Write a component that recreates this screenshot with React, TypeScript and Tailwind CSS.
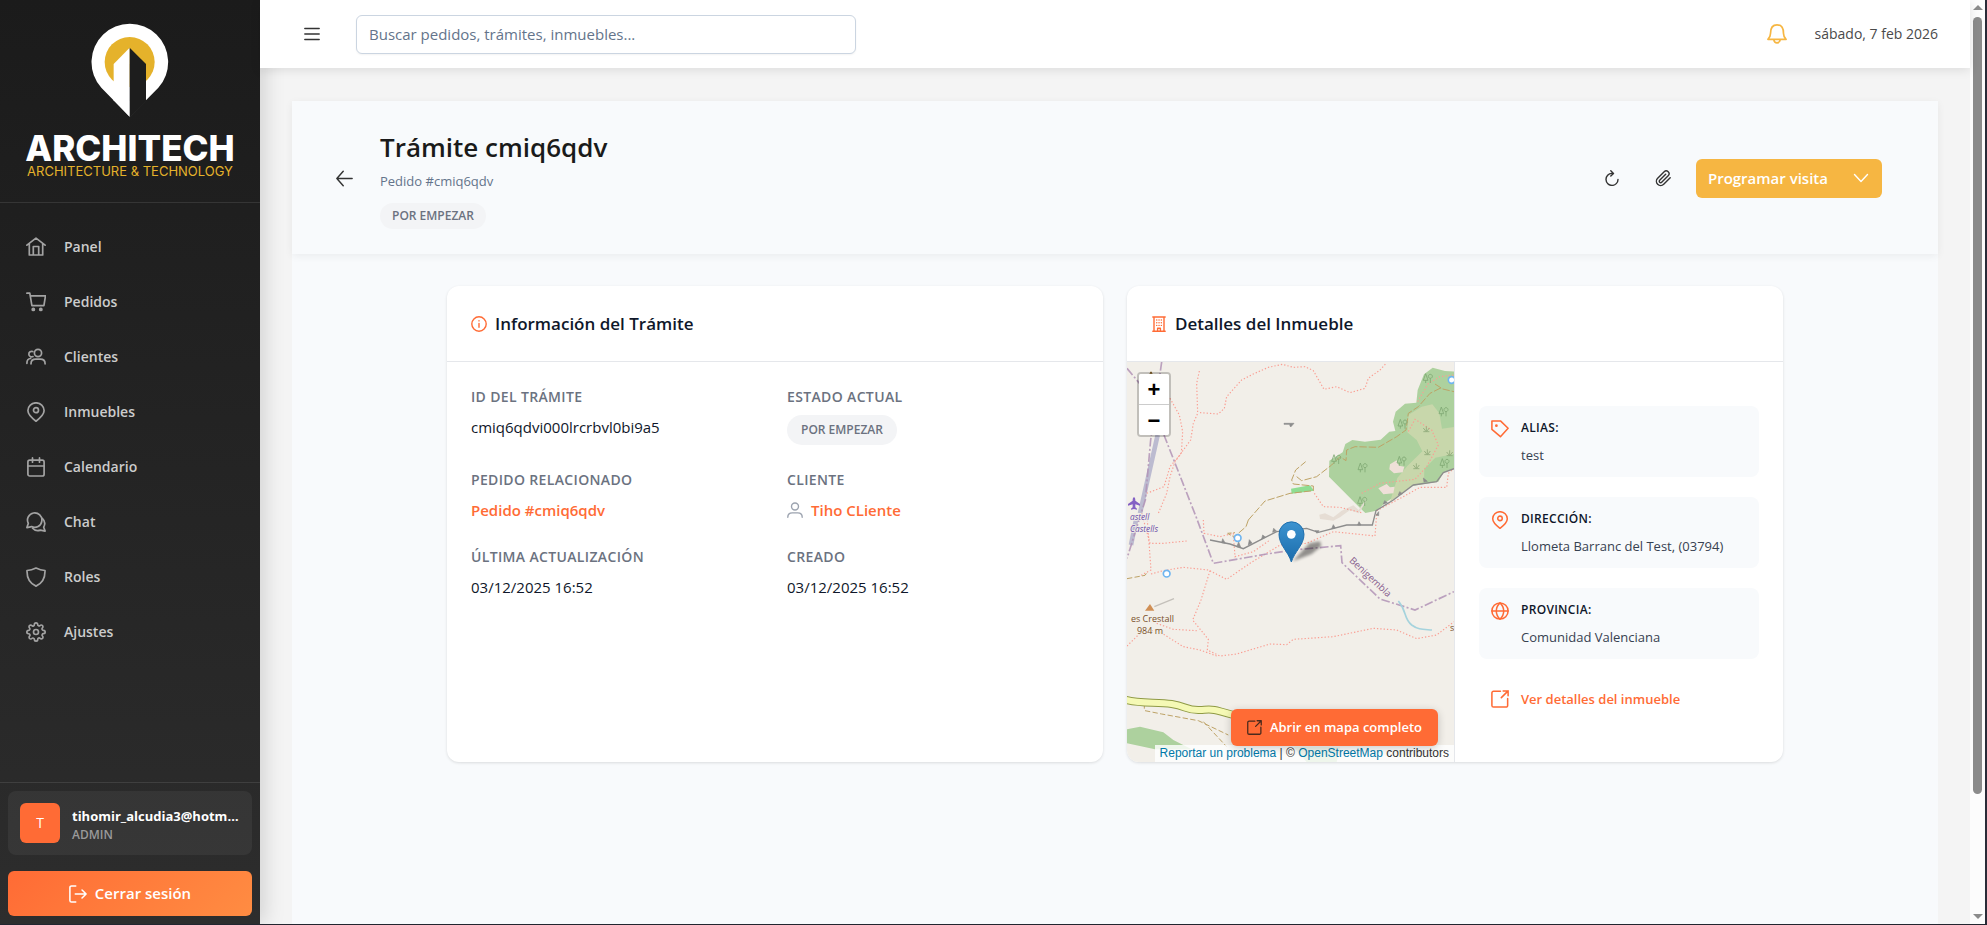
import React from 'react';
import { FiPaperclip, FiSettings } from 'react-icons/fi';

type IconProps = { className?: string; children?: React.ReactNode; box?: number };

const Icon = ({ className = 'size-5', children, box = 20 }: IconProps) => (
  <svg
    className={`shrink-0 ${className}`}
    viewBox={`0 0 ${box} ${box}`}
    fill="none"
    stroke="currentColor"
    strokeWidth={box === 20 ? 1.7 : 1.4}
    strokeLinecap="round"
    strokeLinejoin="round"
    aria-hidden="true"
  >
    {children}
  </svg>
);

const PinIcon = ({ className }: IconProps) => (
  <Icon className={className}>
    <path d="M10 19.2C6.5 16.6 1.9 13 1.9 8.6a8.1 7.8 0 0 1 16.2 0c0 4.4-4.6 8-8.1 10.6z" />
    <circle cx="10" cy="8.2" r="2.5" />
  </Icon>
);

const ExternalIcon = ({ className }: IconProps) => (
  <Icon className={className}>
    <path d="M10.5 1.5H2.8A1.8 1.8 0 0 0 1 3.3v13.9A1.8 1.8 0 0 0 2.8 19h13.9a1.8 1.8 0 0 0 1.8-1.8V9.5M11.5 8.5 19 1M13.5 1H19v5.5" />
  </Icon>
);

const navItems = [
  {
    label: 'Panel',
    icon: (
      <Icon>
        <path d="M.9 8.2 10 1.2l9.1 7M3.3 6.8V18h13.4V6.8M7.3 18V9.5h5.4V18" />
      </Icon>
    ),
  },
  {
    label: 'Pedidos',
    icon: (
      <Icon>
        <path d="M.9 1.2h2.9l2.1 12.4h12l1.6-9.8H4.3" />
        <circle cx="7.3" cy="17.4" r="1.1" fill="currentColor" />
        <circle cx="14.8" cy="17.4" r="1.1" fill="currentColor" />
      </Icon>
    ),
  },
  {
    label: 'Clientes',
    icon: (
      <Icon>
        <circle cx="12" cy="6" r="3.6" />
        <path d="M5 16.8c0-3 1.8-4.6 4.8-4.6h4.5c3 0 4.8 1.6 4.8 4.6M6.8 4.6a2.8 2.8 0 1 0 .2 5M.9 16.3c0-3 1.1-4.6 3.7-4.8" />
      </Icon>
    ),
  },
  { label: 'Inmuebles', icon: <PinIcon /> },
  {
    label: 'Calendario',
    icon: (
      <Icon>
        <rect x="1.9" y="3.2" width="16.2" height="15.8" rx="1.8" />
        <path d="M2 9h16M6.5.9v4.3M13.500.9v4.3" />
      </Icon>
    ),
  },
  {
    label: 'Chat',
    icon: (
      <Icon>
        <path d="M.9 15.6 2.3 11.4a7.2 7.2 0 1 1 3.3 3.2z" />
        <path d="M6.6 16.2c2 2.3 5 2.8 7.8 1.9l4.7 1-1.4-3.9c1.6-3 1-6.6-1.4-8.8" />
      </Icon>
    ),
  },
  {
    label: 'Roles',
    icon: (
      <Icon>
        <path d="M10 1c2.8 1.4 5.8 2.3 9 2.5.2 7.2-2.6 12.8-9 15.6C3.600 16.300.8 10.700 1 3.500 4.200 3.300 7.200 2.400 10 1z" />
      </Icon>
    ),
  },
  { label: 'Ajustes', icon: <FiSettings className="size-5 shrink-0" /> },
];

const Logo = () => (
  <div className="flex flex-col items-center border-b border-white/10 px-4 pt-[23px] pb-6">
    <svg className="h-[94px] w-[78px]" viewBox="272 67 234 282" aria-hidden="true">
      <path d="M388 348 303 261A115 115 0 1 1 474 261L437 299z" fill="#fff" />
      <circle cx="388" cy="184" r="75" fill="#e5b22b" />
      <path d="M340 190 388 141V348L340 299z" fill="#fff" />
      <path d="M388 141 437 190V301L388 350z" fill="#1d1d1d" />
    </svg>
    <div className="mt-[14px] font-['Inter',sans-serif] text-[35px] leading-[34px] font-extrabold text-white">ARCHITECH</div>
    <div className="font-['Inter',sans-serif] text-[13px] leading-[13px] whitespace-nowrap text-[#e5b22b]">
      ARCHITECTURE &amp; TECHNOLOGY
    </div>
  </div>
);

const Sidebar = () => (
  <aside className="relative z-10 flex w-[260px] shrink-0 flex-col bg-linear-to-b from-[#1b1b1b] to-[#2d2d2d] shadow-[4px_0_20px_rgba(0,0,0,0.15)]">
    <Logo />
    <nav className="flex flex-1 flex-col gap-2 pt-5">
      {navItems.map((item) => (
        <a key={item.label} href="#" className="flex h-[47px] items-center gap-[18px] px-[26px] text-sm font-semibold text-[#cccccc]">
          <span className="text-[#a3a3a3]">{item.icon}</span>
          {item.label}
        </a>
      ))}
    </nav>
    <div className="border-t border-white/10 p-2">
      <div className="flex h-16 items-center gap-3 rounded-lg bg-white/5 px-3">
        <div className="flex size-10 shrink-0 items-center justify-center rounded-md bg-[#ff6b35] text-sm text-white">T</div>
        <div className="min-w-0 flex-1 pt-1">
          <p className="truncate text-[13px] leading-5 font-bold text-white">tihomir_alcudia3@hotmail.com</p>
          <p className="text-xs leading-[18px] font-semibold text-[#9a9a9a]">ADMIN</p>
        </div>
      </div>
      <button className="mt-4 flex h-[45px] w-full items-center justify-center gap-2 rounded-md bg-linear-135 from-[#ff6b35] to-[#ff8c42] text-[15px] font-semibold text-white">
        <Icon className="size-[18px]">
          <path d="M7.5 1H2.8A1.8 1.8 0 0 0 1 2.8v14.4A1.8 1.8 0 0 0 2.8 19h4.7M7 10h12M14.5 5.5 19 10l-4.5 4.5" />
        </Icon>
        Cerrar sesión
      </button>
    </div>
  </aside>
);

const TopBar = () => (
  <header className="relative z-20 flex h-[68px] shrink-0 items-center bg-white pr-8 pl-9 shadow-[0_2px_10px_rgba(0,0,0,0.1)]">
    <button aria-label="Menú" className="flex size-8 items-center justify-center text-[#333]">
      <Icon className="size-4" box={16}>
        <path d="M.8 2.500h14.400M.8 8h14.400M.8 13.500h14.400" />
      </Icon>
    </button>
    <input
      type="text"
      aria-label="Buscar"
      placeholder="Buscar pedidos, trámites, inmuebles..."
      className="ml-7 h-[39px] w-[500px] rounded-md border border-[#cbd5e1] bg-white px-3 text-[15px] shadow-xs placeholder:text-[#64748b]"
    />
    <button aria-label="Notificaciones" className="ml-auto text-[#f6b642]">
      <Icon>
        <path d="M.9 15.3h18.2c-1.900-1.700-2.600-3.200-2.600-5.800C16.500 4.300 15 .9 10 .9S3.500 4.300 3.500 9.500c0 2.600-.7 4.100-2.600 5.800zM6.800 15.800c.7 4 5.700 4 6.400 0" />
      </Icon>
    </button>
    <time className="ml-7 text-sm text-[#4a4a4a]">sábado, 7 feb 2026</time>
  </header>
);

const PageHeader = () => (
  <div className="flex items-center pt-[26px] pr-14 pb-[25px] pl-9 shadow-[0_2px_8px_rgba(0,0,0,0.06)]">
    <button aria-label="Volver" className="flex size-8 items-center justify-center text-[#333]">
      <Icon className="size-[17px]">
        <path d="M19 10H1M8.500 1.500 1 10l7.500 8.500" />
      </Icon>
    </button>
    <div className="ml-5">
      <h1 className="text-[26px] leading-10 font-semibold text-[#1a1a1a]">Trámite cmiq6qdv</h1>
      <p className="mt-0.5 text-[13px] leading-6 text-[#64748b]">Pedido #cmiq6qdv</p>
      <span className="mt-2.5 flex h-[26px] w-fit items-center rounded-full bg-[#f3f4f6] px-3 text-xs font-semibold text-[#6b7280]">
        POR EMPEZAR
      </span>
    </div>
    <div className="ml-auto flex items-center">
      <button aria-label="Actualizar" className="flex size-10 items-center justify-center text-[#333]">
        <Icon className="size-4" box={16}>
          <path d="M9.500 3.400H7.800a6 6 0 1 0 6.200 6M6.800.8 9.500 3.400 6.800 6" />
        </Icon>
      </button>
      <button aria-label="Adjuntos" className="ml-3 flex size-10 items-center justify-center text-[#333]">
        <FiPaperclip className="size-[17px]" />
      </button>
      <div className="ml-3 flex h-[39px] rounded-md bg-[#f6b642] text-white">
        <button className="px-3 text-[15px] font-semibold">Programar visita</button>
        <button aria-label="Más acciones" className="flex w-[42px] items-center justify-center">
          <Icon className="size-4" box={16}>
            <path d="M1.500 4.500 8 11.500l6.500-7" />
          </Icon>
        </button>
      </div>
    </div>
  </div>
);

const Field = ({ label, children }: { label: string; children: React.ReactNode }) => (
  <div>
    <dt className="text-sm leading-6 font-semibold tracking-wide text-[#6b7280]">{label}</dt>
    <dd className="mt-1.5 text-[15px] leading-6 text-[#0f172a]">{children}</dd>
  </div>
);

const CardTitle = ({ icon, children }: { icon: React.ReactNode; children: React.ReactNode }) => (
  <div className="flex h-[76px] items-center gap-2 border-b border-[#e5e7eb] px-6 text-[#ff6b35]">
    {icon}
    <h2 className="text-[17px] font-semibold text-[#0f172a]">{children}</h2>
  </div>
);

const InfoCard = () => (
  <section className="rounded-xl bg-white shadow-[0_1px_3px_rgba(0,0,0,0.12)]">
    <CardTitle
      icon={
        <Icon className="size-4" box={16}>
          <circle cx="8" cy="8" r="7.2" />
          <path d="M8 7.5v3.8M8 4.7v.2" />
        </Icon>
      }
    >
      Información del Trámite
    </CardTitle>
    <dl className="grid grid-cols-2 gap-x-6 gap-y-[23px] px-6 pt-[23px]">
      <Field label="ID DEL TRÁMITE">cmiq6qdvi000lrcrbvl0bi9a5</Field>
      <Field label="ESTADO ACTUAL">
        <span className="flex h-[30px] w-fit items-center rounded-full bg-[#f3f4f6] px-3.5 text-xs font-semibold text-[#6b7280]">
          POR EMPEZAR
        </span>
      </Field>
      <Field label="PEDIDO RELACIONADO">
        <a href="#" className="font-semibold text-[#ff6b35]">Pedido #cmiq6qdv</a>
      </Field>
      <Field label="CLIENTE">
        <a href="#" className="flex items-center gap-2 font-semibold text-[#ff6b35]">
          <Icon className="size-4 text-[#9ca3af]" box={16}>
            <circle cx="8" cy="4.5" r="3.5" />
            <path d="M.8 15.200c0-3 1.700-4.300 4.400-4.300h5.600c2.700 0 4.400 1.300 4.400 4.300" />
          </Icon>
          Tiho CLiente
        </a>
      </Field>
      <Field label="ÚLTIMA ACTUALIZACIÓN">03/12/2025 16:52</Field>
      <Field label="CREADO">03/12/2025 16:52</Field>
    </dl>
  </section>
);

const trees = [
  [924, 295], [971, 395], [848, 432], [649, 538], [728, 563], [845, 543], [974, 550], [727, 664],
];
const grass = [[919, 448], [922, 517], [989, 520], [889, 559]];
const springs = [[995, 300], [353, 774], [140, 881]];

// Terrain drawing, three units to a pixel
const Terrain = () => (
  <svg className="absolute inset-0 h-full w-full" viewBox="21 246 981 1200" preserveAspectRatio="xMidYMid slice" fill="none" aria-hidden="true">
    <defs>
      <linearGradient id="marker" x1="0" y1="0" x2="0" y2="1">
        <stop offset="0" stopColor="#3d93d0" />
        <stop offset="1" stopColor="#1a6cab" />
      </linearGradient>
      <filter id="soft">
        <feGaussianBlur stdDeviation="5" />
      </filter>
    </defs>
    <rect x="-500" y="-300" width="2000" height="2400" fill="#f2efe9" />
    {/* woods */}
    <path d="M1010 275 975 273 938 263 912 283 893 330 889 368 855 371 827 395 819 425 826 453 808 455 782 479 735 485 697 480 676 492 668 517 628 542 627 590 718 682 736 699 769 692 800 665 876 618 955 605 970 578 1010 563z" fill="#add19e" />
    <path d="M1010 440 966 446 958 400 937 373 905 380 866 404 862 457 890 480 907 514 862 558 832 594 810 665 876 618 912 606 913 566 946 533 1010 520z" fill="#c8d7ab" />
    <path d="M810 553 830 541 837 557 853 560 848 577 822 580 808 568zM775 625 800 612 810 622 824 620 820 640 790 643z" fill="#efe0d8" />
    <path d="M10 1350 60 1340 130 1357 160 1380 215 1408 105 1408 10 1387zM520 1400H660L650 1446H560z" fill="#add19e" />
    <path d="M513 626 570 616 582 632 515 641z" fill="#8fdd92" />
    <path d="M598 704 615 700 640 712 665 692 700 676 716 690 740 655 735 670 716 700 690 690 660 712 640 722 600 717z" fill="#e6ddd4" />
    {/* runway */}
    <path d="M113 465 60 700 M48 720 33 795" stroke="#bcbbd0" strokeWidth="14" />
    {/* paths */}
    <g stroke="#fa9d92" strokeWidth="3.500" strokeDasharray="4 6">
      <path d="M238 273 230 310 233 400 220 430 212 480 190 510 165 545 150 590 140 640 115 700M240 398 295 402 313 385 320 350 365 300 400 282 445 262 487 253 520 262 555 260 580 272 612 328 650 320 690 338 735 325 745 295 780 270 800 248" />
      <path d="M150 355 178 405 188 455 184 520 150 560 132 620 80 640M65 700 90 790 130 790 200 783M82 720 93 870 60 888M93 882 130 872 190 862 265 870 320 898 390 850 480 795 560 790 640 755 765 768 770 700" />
      <path d="M250 720 252 760 300 770 340 760 345 830 400 815 450 780M270 872 243 960 218 1020 265 1078 262 1110 300 1128 350 1122 450 1092 500 1094 520 1078 640 1070 760 1045 830 1050 890 1076 950 1065 1002 1025M21 1098 60 1060 110 1050 190 1100 240 1110 290 1128M110 1030 160 1048 230 1052" />
      <path d="M583 640 610 680 660 682 725 698M725 640 780 610 885 598 920 560 955 495 935 450 885 418 862 460M770 692 850 650 900 622 980 622 985 580 1002 565M893 365 925 310 960 290 1002 285" />
    </g>
    {/* tracks */}
    <g stroke="#bda266" strokeWidth="3" strokeDasharray="22 6">
      <path d="M385 720 435 663 510 640 580 632 580 618 520 612 515 600 527 570 557 545M530 590 545 602 590 590 635 555 660 530 678 542 680 510 705 500 775 502 830 470 858 450 865 400 895 380 930 340 960 325 1002 335M945 312 965 325M385 720 378 740 355 760 353 770 335 768 323 760 345 758" />
      <path d="M21 896 75 886 83 875M75 1292 125 1302 235 1322 325 1365M250 1325 320 1400M73 1270V1290" strokeDasharray="16 7" />
    </g>
    {/* boundaries */}
    <g stroke="#b293b6" strokeWidth="5" strokeDasharray="26 7 6 7" opacity=".85">
      <path d="M125 246 92 480 76 660 21 835M21 265 60 312 130 460 230 715 280 850 440 822 520 810 662 797 666 848 780 957 885 990 1002 935" />
    </g>
    {/* cliff */}
    <path d="M270 780 330 792 370 806 430 775 470 755 560 745 595 757 680 735 720 735 757 735 768 692 820 660 880 615 950 605 970 578 1002 566" stroke="#8c8c8c" strokeWidth="4" />
    <path d="M305 788l3-12 8 14zM350 800l6-14 6 16zM385 795l3-16 8 10zM425 777l3-12 9 7zM458 757l3-12 8 8zM585 752l6 8 6-8zM635 746l5-12 6 10zM713 735l4-10 6 10zM768 705l8-10v12zM790 672l4-10 8 6zM835 645l4-10 8 6zM912 606l-2-12 12 10zM492 430h30l-10 11-4-8h-16z" stroke="#8c8c8c" strokeWidth="2" fill="#8c8c8c" />
    {/* stream and road */}
    <path d="M835 963C862 995 850 1015 875 1035 895 1050 910 1048 936 1050" stroke="#a5d3dd" strokeWidth="5" />
    <path d="M10 1257C50 1272 110 1265 155 1272S200 1292 240 1290 270 1285 340 1305L460 1350" stroke="#8f9a45" strokeWidth="24" />
    <path d="M10 1257C50 1272 110 1265 155 1272S200 1292 240 1290 270 1285 340 1305L460 1350" stroke="#f5f9b5" strokeWidth="18" />
    {/* vegetation */}
    {trees.map(([x, y]) => (
      <path key={`${x}-${y}`} d={`M${x - 7} ${y - 14}l-7 20h14zm0 20v8M${x + 7} ${y + 14}v-14m0-12a6 6 0 1 0 .1 0z`} stroke="#7fa874" strokeWidth="2.5" />
    ))}
    {grass.map(([x, y]) => (
      <path key={`${x}-${y}`} d={`M${x - 9} ${y + 7}h18M${x} ${y + 7}v-16M${x - 2} ${y + 5}l-7-9M${x + 2} ${y + 5}l7-9`} stroke="#8ea878" strokeWidth="2.5" />
    ))}
    {springs.map(([x, y]) => (
      <circle key={`${x}-${y}`} cx={x} cy={y} r="10" fill="#fff" stroke="#6fb5f0" strokeWidth="5" />
    ))}
    {/* airfield and peak */}
    <path d="M42 652c3 0 4 4 4 10l14 10v5l-14-4v9l5 4v3l-9-2-9 2v-3l5-4v-9l-14 4v-5l14-10c0-6 1-10 4-10z" fill="#8461c4" />
    <path d="M75 992 90 972 103 992z" fill="#d08f55" />
    <path d="M103 980 162 956" stroke="#c4c0ba" strokeWidth="4" />
    <path d="M88 281l5-7 5 7z" fill="#734a08" />
    <g className="font-['Open_Sans','Noto_Sans',sans-serif]" fontSize="27" strokeWidth="5" paintOrder="stroke" stroke="#f2efe9">
      <text x="88" y="719" textAnchor="end" fontStyle="italic" fontSize="25" fill="#6b4ca8">astell</text>
      <text x="114" y="756" textAnchor="end" fontStyle="italic" fontSize="25" fill="#6b4ca8">Castells</text>
      <text x="162" y="1026" textAnchor="end" fill="#7a4f2a">es Crestall</text>
      <text x="90" y="1062" textAnchor="middle" fill="#7a4f2a">984 m</text>
      <text x="686" y="844" fontSize="29" fill="#8a6390" transform="rotate(43 686 844)">Benigembla</text>
      <text x="990" y="1052" fill="#7a4f2a">s</text>
    </g>
    {/* marker */}
    <path d="M518 844 568 790 600 784 604 798 575 822z" fill="#000" opacity=".4" filter="url(#soft)" />
    <path d="M514 846C505 815 477 795 477 763a37 37 0 0 1 75 0C552 795 523 815 514 846z" fill="url(#marker)" stroke="#1f6fae" strokeWidth="3" />
    <circle cx="514" cy="763" r="13" fill="#fff" />
  </svg>
);

const MapPane = () => (
  <div className="relative min-h-[400px] overflow-hidden rounded-bl-xl border-r border-[#e5e7eb]">
    <Terrain />
    <div className="absolute top-2.5 left-2.5 flex w-[34px] flex-col overflow-hidden rounded border-2 border-black/20 bg-clip-padding font-['Liberation_Sans',sans-serif] text-[22px] font-bold text-black">
      <button aria-label="Acercar" className="flex h-[31px] items-center justify-center border-b border-[#ccc] bg-white">
        +
      </button>
      <button aria-label="Alejar" className="flex h-[30px] items-center justify-center bg-white">
        −
      </button>
    </div>
    <div className="absolute right-0 bottom-0 bg-white/80 px-[5px] font-['Liberation_Sans',sans-serif] text-xs leading-[17px] whitespace-nowrap text-[#333]">
      <a href="#" className="text-[#0078a8]">Reportar un problema</a> | © <a href="#" className="text-[#0078a8]">OpenStreetMap</a> contributors
    </div>
    <button className="absolute right-4 bottom-4 flex h-[37px] items-center gap-2 rounded-md bg-[#ff6b35] px-4 text-[13px] font-semibold whitespace-nowrap text-white shadow-[0_2px_8px_rgba(0,0,0,0.2)]">
      <ExternalIcon className="size-[15px] text-[#4a2a1d]" />
      Abrir en mapa completo
    </button>
  </div>
);

const details = [
  {
    label: 'ALIAS:',
    value: 'test',
    icon: (
      <Icon className="size-[18px]">
        <path d="M1 1h9.5l8.5 8.2-8.5 9.3L1 10.5z" />
        <path d="M6 6.2v.1" strokeWidth="3" />
      </Icon>
    ),
  },
  { label: 'DIRECCIÓN:', value: 'Llometa Barranc del Test, (03794)', icon: <PinIcon className="size-[18px]" /> },
  {
    label: 'PROVINCIA:',
    value: 'Comunidad Valenciana',
    icon: (
      <Icon className="size-[18px]">
        <circle cx="10" cy="10" r="9" />
        <path d="M1 10h18M10 1c-5.500 5-5.500 13 0 18M10 1c5.500 5 5.500 13 0 18" />
      </Icon>
    ),
  },
];

const PropertyCard = () => (
  <section className="rounded-xl bg-white shadow-[0_1px_3px_rgba(0,0,0,0.12)]">
    <CardTitle
      icon={
        <Icon className="size-4" box={16}>
          <path d="M3 1v14M13 1v14M1.800 1h12.400M1.800 15.200h12.400M6.600 15v-2.800h2.800V15" />
          <path d="M5.700 4h.1M8 4h.1M10.300 4h.1M5.700 6.700h.1M8 6.700h.1M10.300 6.700h.1M5.700 9.400h.1M8 9.400h.1M10.300 9.400h.1" />
        </Icon>
      }
    >
      Detalles del Inmueble
    </CardTitle>
    <div className="grid grid-cols-2">
      <MapPane />
      <div className="flex flex-col justify-center gap-5 px-6">
        {details.map((item) => (
          <div key={item.label} className="flex gap-3 rounded-lg bg-[#f8fafc] px-3 py-2.5 text-[#ff6b35]">
            <span className="pt-1">{item.icon}</span>
            <div>
              <p className="text-xs leading-6 font-semibold tracking-wide text-[#0f172a]">{item.label}</p>
              <p className="mt-1 text-[13px] leading-[23px] text-[#374151]">{item.value}</p>
            </div>
          </div>
        ))}
        <a href="#" className="flex items-center gap-3 px-3 py-2 text-[13px] leading-6 font-semibold text-[#ff6b35]">
          <ExternalIcon className="size-[18px]" />
          Ver detalles del inmueble
        </a>
      </div>
    </div>
  </section>
);

const ScrollRail = () => (
  <div className="flex w-[17px] shrink-0 flex-col items-center border-r-2 border-[#2a2b38] bg-[#fcfcfc] py-[5px]" aria-hidden="true">
    <div className="border-x-[5px] border-b-[5px] border-x-transparent border-b-[#8b8b8b]" />
    <div className="mt-[7px] w-[9px] basis-[85%] rounded-full bg-[#8b8b8b]" />
    <div className="mt-auto border-x-[5px] border-t-[5px] border-x-transparent border-t-[#8b8b8b]" />
  </div>
);

const App = () => {
  return (
    <div className="flex h-screen overflow-hidden border-b border-[#22252f] bg-[#f4f4f4] font-['Open_Sans','Noto_Sans',sans-serif]">
      <Sidebar />
      <div className="flex min-w-0 flex-1 flex-col">
        <TopBar />
        <main className="flex flex-1 flex-col overflow-hidden px-8 pt-[33px]">
          <div className="flex-1 bg-[#f8fafc]">
            <PageHeader />
            <div className="mx-auto grid max-w-[1400px] grid-cols-2 gap-6 p-8">
              <InfoCard />
              <PropertyCard />
            </div>
          </div>
        </main>
      </div>
      <ScrollRail />
    </div>
  );
};

export default App;
